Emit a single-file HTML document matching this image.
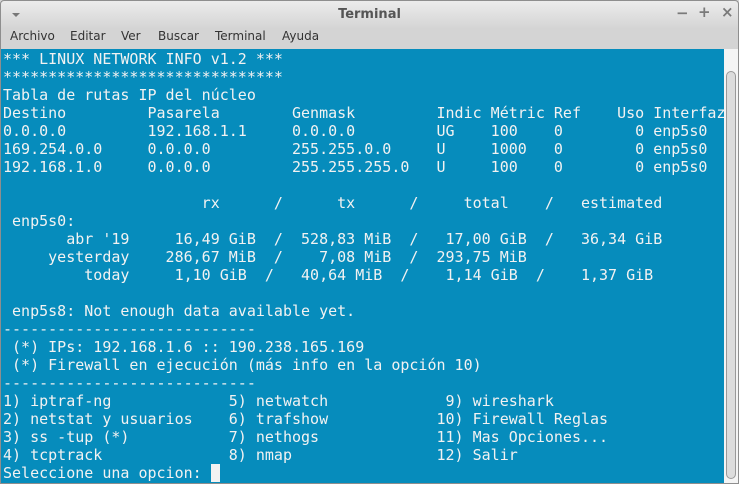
<!DOCTYPE html>
<html><head><meta charset="utf-8"><style>
*{margin:0;padding:0}
body{width:739px;height:484px;overflow:hidden;background:#d6d6d6;font-family:"DejaVu Sans","Liberation Sans",sans-serif;position:relative}
.win{position:absolute;left:0;top:0;width:737px;height:482px;border:1px solid #8e8e8e;border-radius:4px 4px 0 0;background:linear-gradient(#ececec,#d4d4d4 28px,#d4d4d4);overflow:hidden}
.title{position:absolute;top:6px;left:0;width:100%;text-align:center;font-size:13px;font-weight:bold;color:#555}
.menu span{position:absolute;top:28px;font-size:12px;color:#333}
.term{position:absolute;left:0;top:48px;width:723px;height:434px;background:#068cbc}
pre{position:absolute;left:2px;top:1px;font-family:"DejaVu Sans Mono","Liberation Mono",monospace;font-size:15px;line-height:18px;color:#f2f2f2}
.cur{background:#f2f2f2}
.sb{position:absolute;left:723px;top:48px;width:14px;height:434px;background:#f4f4f4}
.thumb{position:absolute;left:2px;top:22px;width:8px;height:406px;border:1px solid #999;border-radius:5px;background:#dcdcdc}
.ctl{position:absolute;top:2px;font-size:15px;color:#7a7a7a;font-weight:bold}
</style></head><body>
<div class="win">
<div style="position:absolute;left:11px;top:12px;width:0;height:0;border-left:4px solid transparent;border-right:4px solid transparent;border-top:4px solid #777"></div>
<div class="title">Terminal</div>
<div class="ctl" style="left:675px;top:3px">−</div>
<div class="ctl" style="left:697px">+</div>
<div class="ctl" style="left:720px">×</div>
<div class="menu"><span style="left:9px">Archivo</span><span style="left:69px">Editar</span><span style="left:120px">Ver</span><span style="left:157px">Buscar</span><span style="left:214px">Terminal</span><span style="left:281px">Ayuda</span></div>
<div class="term"><pre>*** LINUX NETWORK INFO v1.2 ***
*******************************
Tabla de rutas IP del núcleo
Destino         Pasarela        Genmask         Indic Métric Ref    Uso Interfaz
0.0.0.0         192.168.1.1     0.0.0.0         UG    100    0        0 enp5s0
169.254.0.0     0.0.0.0         255.255.0.0     U     1000   0        0 enp5s0
192.168.1.0     0.0.0.0         255.255.255.0   U     100    0        0 enp5s0

                      rx      /      tx      /     total    /   estimated
 enp5s0:
       abr '19     16,49 GiB  /  528,83 MiB  /   17,00 GiB  /   36,34 GiB
     yesterday    286,67 MiB  /    7,08 MiB  /  293,75 MiB
         today     1,10 GiB  /   40,64 MiB  /    1,14 GiB  /    1,37 GiB

 enp5s8: Not enough data available yet.
----------------------------
 (*) IPs: 192.168.1.6 :: 190.238.165.169
 (*) Firewall en ejecución (más info en la opción 10)
----------------------------
1) iptraf-ng             5) netwatch             9) wireshark
2) netstat y usuarios    6) trafshow            10) Firewall Reglas
3) ss -tup (*)           7) nethogs             11) Mas Opciones...
4) tcptrack              8) nmap                12) Salir
Seleccione una opcion: <span class="cur"> </span></pre></div>
<div class="sb"><div class="thumb"></div></div>
</div>
</body></html>
